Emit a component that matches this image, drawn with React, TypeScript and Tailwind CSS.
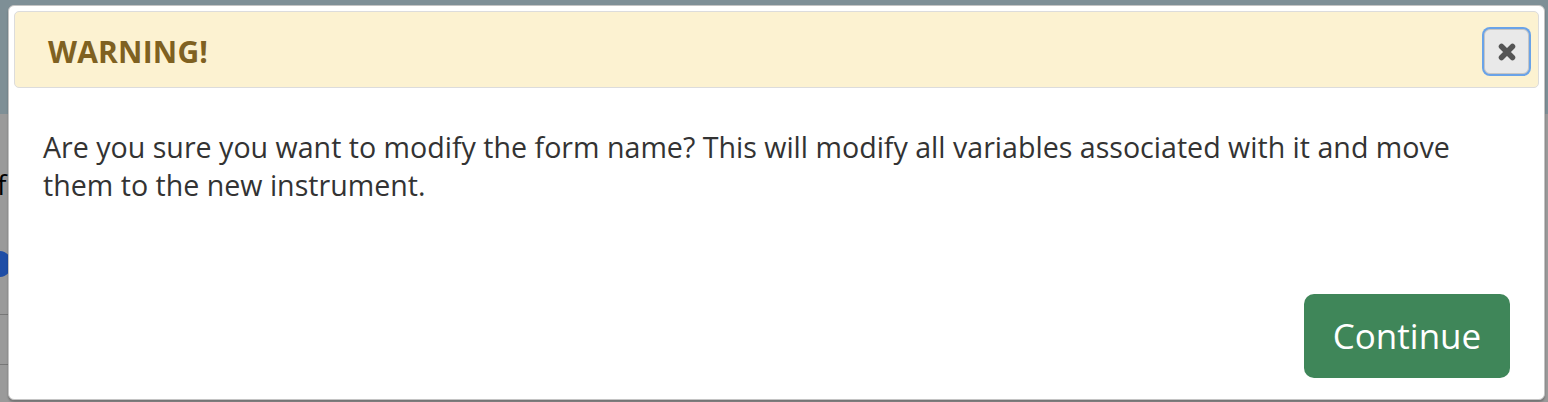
export default function App() {
  return (
    <div
      className="relative h-[402px] w-[1548px] overflow-hidden bg-[#9a9a9a]"
      style={{ fontFamily: '"Open Sans", "Liberation Sans", sans-serif' }}
    >
      {/* dimmed page behind the dialog */}
      <div className="h-[114px] bg-[#7e8f96]" />
      <div className="relative h-[288px]">
        <span className="absolute left-[-3px] top-[56px] text-[28px] leading-none text-black">f</span>
        <span className="absolute left-[-14px] top-[137px] h-[26px] w-[26px] rounded-full border-[3px] border-[#1f4ea6] bg-[#1f4ea6] ring-2 ring-[#9a9a9a]" />
        <div className="absolute left-0 top-[200px] h-px w-[8px] bg-[#777]" />
        <div className="absolute left-0 top-[250px] h-px w-[8px] bg-[#777]" />
      </div>

      {/* dialog */}
      <div className="absolute left-[8px] top-[5px] flex h-[395px] w-[1537px] flex-col rounded-[6px] border border-[#c4c4c4] bg-white p-[5px] shadow-[0_2px_2px_rgba(0,0,0,0.25)]">
        <div className="flex h-[77px] items-center justify-between rounded-[5px] border border-[#dcdcdc] bg-[#fcf2d1] pl-[33px] pr-[9px]">
          <span className="mt-[4px] text-[30px] font-bold tracking-[0.2px] text-[#7f6121]">WARNING!</span>
          <button className="mt-[4px] flex h-[45px] w-[45px] items-center justify-center rounded-[6px] border border-[#c5c5c5] bg-[#e9e9e9] ring-2 ring-[#6aa3e8]">
            <svg width="20" height="20" viewBox="0 0 20 20" aria-hidden>
              <path d="M4.5 4.5 L15.5 15.5 M15.5 4.5 L4.5 15.5" stroke="#555" strokeWidth="5.5" strokeLinecap="round" fill="none" />
            </svg>
          </button>
        </div>

        <div className="flex flex-1 flex-col px-[29px] pb-[16px] pt-[40px]">
          <p className="text-[28.6px] leading-[38px] text-[#333]">
            Are you sure you want to modify the form name? This will modify all variables associated with it and move
            them to the new instrument.
          </p>
          <div className="mt-auto flex justify-end">
            <button className="h-[84px] w-[206px] rounded-[10px] bg-[#3f8659] text-[35px] text-white">Continue</button>
          </div>
        </div>
      </div>
    </div>
  );
}
